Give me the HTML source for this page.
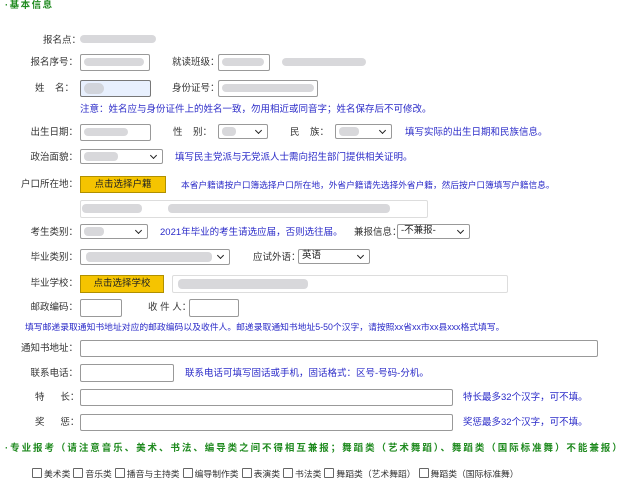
<!DOCTYPE html><html><head><meta charset="utf-8"><style>
body{margin:0;width:640px;height:498px;background:#fff;font-family:"Liberation Sans","Noto Sans CJK SC",sans-serif;font-size:9.5px;color:#333;position:relative;overflow:hidden}
.a{position:absolute;white-space:nowrap;line-height:12px;margin-top:3px}
.l{text-align:right;width:73px}
.n{color:#2b2bc8}
.g{color:#1f8a1f;font-weight:bold;letter-spacing:1.5px}
.i{position:absolute;border:1px solid #999;border-radius:2px;background:#fff;box-sizing:border-box}
.s::after{content:"";position:absolute;right:6px;top:3px;width:4px;height:4px;border-right:1.5px solid #222;border-bottom:1.5px solid #222;transform:rotate(45deg)}
.b{position:absolute;background:#f5c400;border:1px solid #b09000;box-sizing:border-box;text-align:center;font-size:9.5px;line-height:15px;color:#222}
.bl{position:absolute;background:#c8c8cc;border-radius:4px;opacity:.7}
.cb{display:inline-block;width:8px;height:8px;border:1px solid #666;border-radius:1px;vertical-align:-1px;margin:0 2px 0 3px}
</style></head><body>
<div class="a g" style="left:5px;top:0px;margin-top:0">·基本信息</div>
<div class="a" style="left:43px;top:32px">报名点：</div><div class="bl" style="left:80px;top:35px;width:76px;height:8px"></div>
<div class="a l" style="left:5px;top:54px">报名序号：</div><div class="i" style="left:80px;top:54px;width:70px;height:17px"></div><div class="bl" style="left:84px;top:58px;width:60px;height:8px"></div>
<div class="a" style="left:172px;top:54px">就读班级：</div><div class="i" style="left:218px;top:54px;width:52px;height:17px"></div><div class="bl" style="left:222px;top:58px;width:42px;height:8px"></div><div class="bl" style="left:282px;top:58px;width:84px;height:8px"></div>
<div class="a" style="left:35px;top:80px">姓&nbsp;&nbsp;&nbsp;&nbsp;名：</div><div class="i" style="left:80px;top:80px;width:71px;height:17px;background:#e8f0fe;border-color:#777"></div><div class="bl" style="left:84px;top:83px;width:20px;height:11px;border-radius:6px"></div>
<div class="a" style="left:172px;top:80px">身份证号：</div><div class="i" style="left:218px;top:80px;width:100px;height:17px"></div><div class="bl" style="left:222px;top:84px;width:92px;height:8px"></div>
<div class="a n" style="left:80px;top:101px">注意：姓名应与身份证件上的姓名一致，勿用相近或同音字；姓名保存后不可修改。</div>
<div class="a l" style="left:5px;top:124px">出生日期：</div><div class="i" style="left:80px;top:124px;width:71px;height:17px"></div><div class="bl" style="left:84px;top:128px;width:44px;height:8px"></div>
<div class="a" style="left:173px;top:124px">性&nbsp;&nbsp;&nbsp;&nbsp;别：</div><div class="i s" style="left:218px;top:124px;width:50px;height:15px"></div><div class="bl" style="left:222px;top:127px;width:14px;height:9px"></div>
<div class="a" style="left:290px;top:124px">民&nbsp;&nbsp;&nbsp;&nbsp;族：</div><div class="i s" style="left:335px;top:124px;width:57px;height:15px"></div><div class="bl" style="left:339px;top:127px;width:20px;height:9px"></div>
<div class="a n" style="left:405px;top:124px">填写实际的出生日期和民族信息。</div>
<div class="a l" style="left:5px;top:149px">政治面貌：</div><div class="i s" style="left:80px;top:149px;width:83px;height:15px"></div><div class="bl" style="left:84px;top:152px;width:34px;height:9px"></div>
<div class="a n" style="left:175px;top:149px">填写民主党派与无党派人士需向招生部门提供相关证明。</div>
<div class="a l" style="left:5px;top:176px">户口所在地：</div><div class="b" style="left:80px;top:176px;width:86px;height:17px">点击选择户籍</div>
<div class="a n" style="left:181px;top:176px;font-size:8.7px">本省户籍请按户口簿选择户口所在地，外省户籍请先选择外省户籍，然后按户口簿填写户籍信息。</div>
<div class="i" style="left:80px;top:200px;width:348px;height:18px;border-color:#ddd"></div><div class="bl" style="left:82px;top:204px;width:60px;height:9px"></div><div class="bl" style="left:168px;top:204px;width:222px;height:9px"></div>
<div class="a l" style="left:5px;top:224px">考生类别：</div><div class="i s" style="left:80px;top:224px;width:68px;height:15px"></div><div class="bl" style="left:84px;top:227px;width:20px;height:9px"></div>
<div class="a n" style="left:160px;top:224px">2021年毕业的考生请选应届，否则选往届。</div>
<div class="a" style="left:354px;top:224px">兼报信息：</div><div class="i s" style="left:397px;top:224px;width:73px;height:15px;padding-left:3px;line-height:12px;color:#222">-不兼报-</div>
<div class="a l" style="left:5px;top:249px">毕业类别：</div><div class="i s" style="left:80px;top:249px;width:150px;height:16px"></div><div class="bl" style="left:86px;top:252px;width:126px;height:10px"></div>
<div class="a" style="left:253px;top:249px">应试外语：</div><div class="i s" style="left:298px;top:249px;width:72px;height:15px;padding-left:3px;line-height:12px;color:#222">英语</div>
<div class="a l" style="left:5px;top:275px">毕业学校：</div><div class="b" style="left:80px;top:275px;width:84px;height:18px;line-height:16px">点击选择学校</div>
<div class="i" style="left:172px;top:275px;width:336px;height:18px;border-color:#ddd"></div><div class="bl" style="left:178px;top:279px;width:130px;height:10px"></div>
<div class="a l" style="left:5px;top:299px">邮政编码：</div><div class="i" style="left:80px;top:299px;width:42px;height:18px"></div>
<div class="a" style="left:148px;top:299px">收&nbsp;件&nbsp;人：</div><div class="i" style="left:189px;top:299px;width:50px;height:18px"></div>
<div class="a n" style="left:25px;top:318px;font-size:8.8px">填写邮递录取通知书地址对应的邮政编码以及收件人。邮递录取通知书地址5-50个汉字，请按照xx省xx市xx县xxx格式填写。</div>
<div class="a l" style="left:5px;top:340px">通知书地址：</div><div class="i" style="left:80px;top:340px;width:518px;height:17px"></div>
<div class="a l" style="left:5px;top:365px">联系电话：</div><div class="i" style="left:80px;top:364px;width:94px;height:18px"></div>
<div class="a n" style="left:185px;top:365px">联系电话可填写固话或手机，固话格式：区号-号码-分机。</div>
<div class="a" style="left:35px;top:389px">特&nbsp;&nbsp;&nbsp;&nbsp;&nbsp;&nbsp;长：</div><div class="i" style="left:80px;top:389px;width:373px;height:17px"></div>
<div class="a n" style="left:463px;top:389px">特长最多32个汉字，可不填。</div>
<div class="a" style="left:35px;top:414px">奖&nbsp;&nbsp;&nbsp;&nbsp;&nbsp;&nbsp;惩：</div><div class="i" style="left:80px;top:414px;width:373px;height:17px"></div>
<div class="a n" style="left:463px;top:414px">奖惩最多32个汉字，可不填。</div>
<div class="a g" style="left:5px;top:440px;letter-spacing:1.95px;font-size:9.5px">·专业报考（请注意音乐、美术、书法、编导类之间不得相互兼报；舞蹈类（艺术舞蹈）、舞蹈类（国际标准舞）不能兼报）</div>
<div class="a" style="left:29px;top:465px;font-size:8.8px"><span class="cb"></span>美术类<span class="cb"></span>音乐类<span class="cb"></span>播音与主持类<span class="cb"></span>编导制作类<span class="cb"></span>表演类<span class="cb"></span>书法类<span class="cb"></span>舞蹈类（艺术舞蹈）<span class="cb"></span>舞蹈类（国际标准舞）</div>
</body></html>
